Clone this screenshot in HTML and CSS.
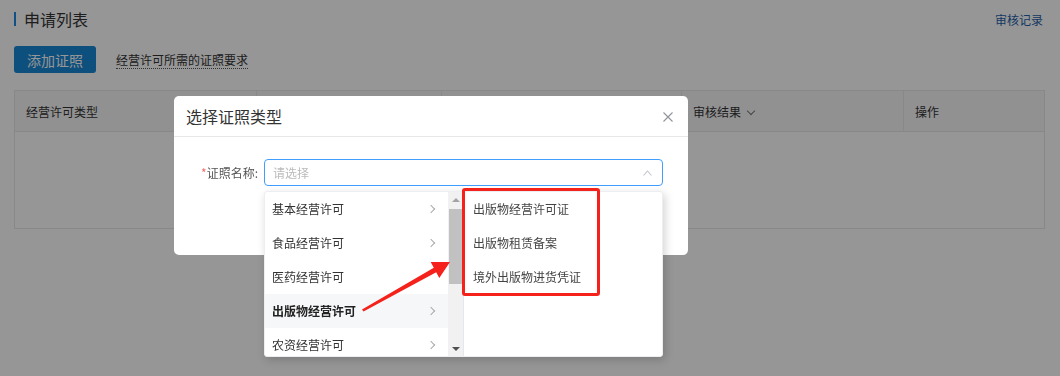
FILE: index.html
```html
<!DOCTYPE html>
<html lang="zh-CN">
<head>
    <meta charset="UTF-8">
    <title>申请列表</title>
    <link rel="stylesheet" href="styles.css">
</head>
<body>
    <div class="page">
        <div class="page-head">
            <h2 class="page-title">申请列表</h2>
            <a class="log-link">审核记录</a>
        </div>
        <div class="toolbar">
            <button class="btn-primary">添加证照</button>
            <span class="tip-link">经营许可所需的证照要求</span>
        </div>
        <table class="apply-table">
            <colgroup>
                <col style="width: 242px">
                <col style="width: 185px">
                <col style="width: 240px">
                <col style="width: 222px">
                <col style="width: 141px">
            </colgroup>
            <thead>
                <tr>
                    <th>经营许可类型</th>
                    <th></th>
                    <th></th>
                    <th>审核结果 <span class="caret-down"></span></th>
                    <th>操作</th>
                </tr>
            </thead>
            <tbody>
                <tr class="empty-row"><td colspan="5"></td></tr>
            </tbody>
        </table>
    </div>

    <div class="mask"></div>

    <div class="dialog">
        <div class="dialog-header">
            <span class="dialog-title">选择证照类型</span>
            <svg class="dialog-close" width="10" height="10" viewBox="0 0 10 10">
                <path d="M0.5 0.5L9.5 9.5M9.5 0.5L0.5 9.5" stroke="#909399" stroke-width="1.1" fill="none"/>
            </svg>
        </div>
        <div class="dialog-body">
            <div class="form-item">
                <label class="form-label"><i>*</i>证照名称:</label>
                <div class="select-wrap">
                    <div class="select is-focus">
                        <span class="placeholder">请选择</span>
                        <svg class="select-arrow" width="9" height="6" viewBox="0 0 9 6">
                            <path d="M0.5 5.5L4.5 1L8.5 5.5" stroke="#c0c4cc" stroke-width="1.1" fill="none"/>
                        </svg>
                    </div>

                    <div class="cascader-panel">
                        <div class="cascader-menu first">
                            <ul class="menu-list">
                                <li>基本经营许可<span class="chev"></span></li>
                                <li>食品经营许可<span class="chev"></span></li>
                                <li>医药经营许可</li>
                                <li class="is-hover">出版物经营许可<span class="chev"></span></li>
                                <li>农资经营许可<span class="chev"></span></li>
                            </ul>
                            <div class="fake-scrollbar">
                                <span class="sb-up"></span>
                                <span class="sb-thumb"></span>
                                <span class="sb-down"></span>
                            </div>
                        </div>
                        <div class="cascader-menu second">
                            <ul class="menu-list">
                                <li>出版物经营许可证</li>
                                <li>出版物租赁备案</li>
                                <li>境外出版物进货凭证</li>
                            </ul>
                            <div class="mark-box"></div>
                        </div>
                    </div>
                </div>
            </div>
        </div>
    </div>

    <!-- annotation arrow -->
    <svg class="annot-arrow" width="1060" height="376" viewBox="0 0 1060 376">
        <polygon points="362,309.5 433.8,267.8 430.7,262.1 450,262 439.3,277.9 436.2,272.2 363.5,311.5" fill="#f5221b"/>
    </svg>
</body>
</html>
```

FILE: styles.css
```css
* {
    margin: 0;
    padding: 0;
    box-sizing: border-box;
}

body {
    position: relative;
    width: 1060px;
    height: 376px;
    overflow: hidden;
    background: #fff;
    font-family: "Noto Sans CJK SC", "Noto Sans", sans-serif;
    font-size: 12px;
    color: #333;
}

.page {
    padding: 8px 16px 0 14px;
}

.page-head {
    display: flex;
    justify-content: space-between;
    align-items: center;
    height: 22px;
}

.page-title {
    font-size: 16px;
    font-weight: normal;
    line-height: 22px;
    color: #333;
    display: flex;
    align-items: center;
}

.page-title::before {
    content: '';
    display: inline-block;
    width: 2px;
    height: 14px;
    background: #1e88e5;
    margin-right: 8px;
}

.log-link {
    font-size: 12px;
    color: #1f5fa8;
    margin-right: 1px;
}

.toolbar {
    display: flex;
    align-items: center;
    margin-top: 16px;
    height: 27px;
}

.btn-primary {
    width: 82px;
    height: 27px;
    border: none;
    border-radius: 3px;
    background: #1786d4;
    color: #fff;
    font-family: inherit;
    font-size: 14px;
}

.tip-link {
    margin-left: 20px;
    font-size: 12px;
    line-height: 16px;
    color: #333;
    border-bottom: 1px dotted #555;
    margin-top: 2px;
}

.apply-table {
    margin-top: 17px;
    width: 1030px;
    border-collapse: collapse;
    table-layout: fixed;
    border: 1px solid #e8e8e8;
}

.apply-table th {
    height: 41px;
    background: #f7f7f8;
    border: 1px solid #e8e8e8;
    text-align: left;
    font-weight: normal;
    padding-left: 11px;
    color: #333;
}

.caret-down {
    display: inline-block;
    width: 6px;
    height: 6px;
    border-right: 1px solid #777;
    border-bottom: 1px solid #777;
    transform: rotate(45deg);
    margin: 0 0 3px 4px;
}

.empty-row td {
    height: 97px;
}

.mask {
    position: fixed;
    inset: 0;
    background: rgba(0, 0, 0, 0.41);
}

.dialog {
    position: absolute;
    left: 174px;
    top: 96px;
    width: 514px;
    height: 159px;
    background: #fff;
    border-radius: 5px;
}

.dialog-header {
    height: 41px;
    padding: 0 15px 0 12px;
    border-bottom: 1px solid #e8e8e8;
    display: flex;
    justify-content: space-between;
    align-items: center;
}

.dialog-title {
    font-size: 16px;
    color: #333;
    line-height: 20px;
}

.dialog-close {
    margin-top: 1px;
}

.dialog-body {
    padding-top: 22px;
}

.form-item {
    display: flex;
    align-items: flex-start;
}

.form-label {
    width: 90px;
    padding-right: 6px;
    text-align: right;
    line-height: 27px;
    color: #555;
}

.form-label i {
    font-style: normal;
    color: #f56c6c;
}

.select-wrap {
    position: relative;
}

.select {
    width: 399px;
    height: 27px;
    border: 1px solid #dcdfe6;
    border-radius: 4px;
    display: flex;
    align-items: center;
    justify-content: space-between;
    padding: 0 10px 0 8px;
}

.select.is-focus {
    border-color: #409eff;
}

.placeholder {
    color: #bbb;
}

.cascader-panel {
    position: absolute;
    top: 32px;
    left: 0;
    width: 399px;
    height: 166px;
    display: flex;
    background: #fff;
    border: 1px solid #eceef2;
    border-radius: 3px;
    box-shadow: 2px 3px 10px rgba(0, 0, 0, 0.18);
    overflow: visible;
}

.cascader-menu {
    position: relative;
    height: 100%;
    overflow: hidden;
}

.cascader-menu.first {
    width: 199px;
    display: flex;
    border-right: 1px solid #e4e7ed;
}

.cascader-menu.second {
    flex: 1;
    overflow: visible;
}

.menu-list {
    list-style: none;
    flex: 1;
}

.menu-list li {
    height: 34px;
    line-height: 34px;
    padding: 0 8px 0 7px;
    color: #333;
    display: flex;
    justify-content: space-between;
    align-items: center;
    white-space: nowrap;
}

.second .menu-list li {
    padding-left: 9px;
    color: #444;
}

.menu-list li.is-hover {
    background: #f6f7f9;
    font-weight: bold;
    color: #222;
}

.chev {
    width: 6px;
    height: 6px;
    border-right: 1px solid #aaa;
    border-top: 1px solid #aaa;
    transform: rotate(45deg);
    margin-right: 6px;
}

.fake-scrollbar {
    width: 15px;
    height: 100%;
    background: #f1f1f1;
    display: flex;
    flex-direction: column;
    align-items: center;
}

.sb-up,
.sb-down {
    width: 0;
    height: 0;
    border-left: 4px solid transparent;
    border-right: 4px solid transparent;
}

.sb-up {
    border-bottom: 4px solid #a3a3a3;
    margin: 6px 0 7px;
}

.sb-thumb {
    width: 13px;
    height: 75px;
    background: #c1c1c1;
}

.sb-down {
    border-top: 4px solid #505050;
    margin-top: auto;
    margin-bottom: 5px;
}

.mark-box {
    position: absolute;
    left: -2px;
    top: -4px;
    width: 138px;
    height: 108px;
    border: 3px solid #f5221b;
    border-radius: 3px;
}

.annot-arrow {
    position: absolute;
    left: 0;
    top: 0;
    pointer-events: none;
}
```
